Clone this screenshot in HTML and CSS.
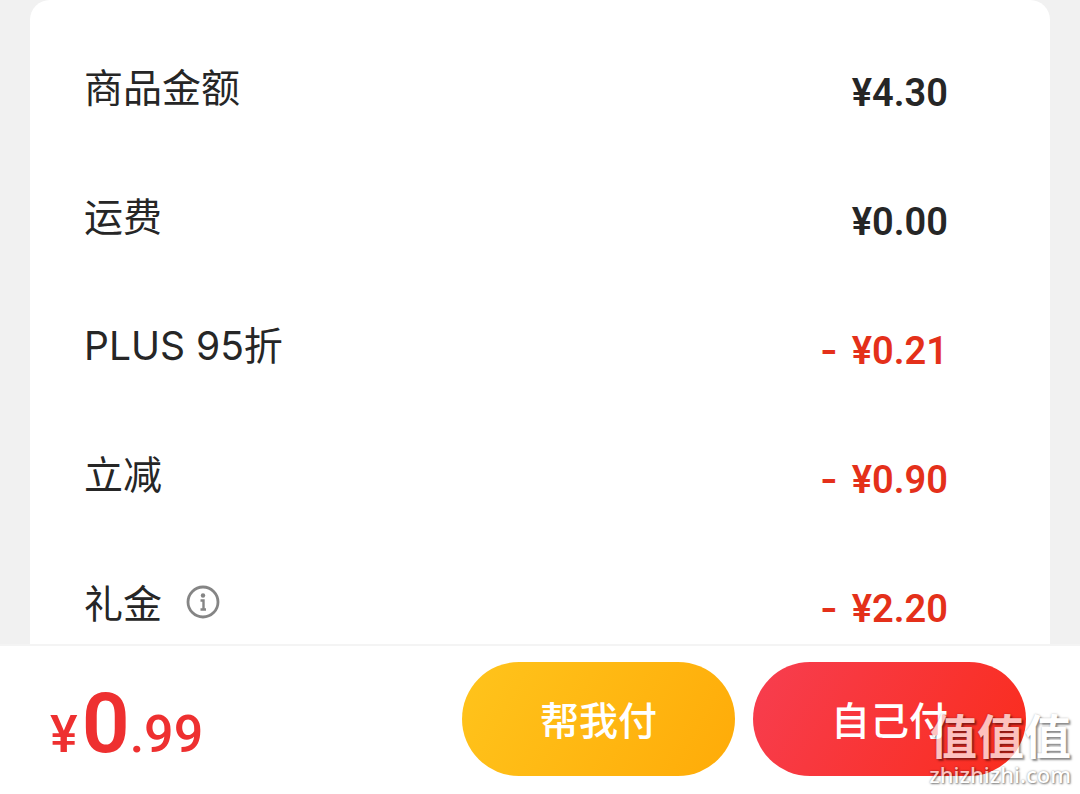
FILE: index.html
```html
<!DOCTYPE html>
<html lang="zh-CN">
<head>
    <meta charset="UTF-8">
    <meta name="viewport" content="width=device-width, initial-scale=1.0">
    <title>确认订单</title>
    <link rel="stylesheet" href="styles.css">
</head>
<body>

    <main class="content">
        <dl class="card">
            <div class="row">
                <dt>商品金额</dt>
                <dd>¥4.30</dd>
            </div>
            <div class="row">
                <dt>运费</dt>
                <dd>¥0.00</dd>
            </div>
            <div class="row discount">
                <dt>PLUS 95折</dt>
                <dd><span class="minus">-</span>¥0.21</dd>
            </div>
            <div class="row discount">
                <dt>立减</dt>
                <dd><span class="minus">-</span>¥0.90</dd>
            </div>
            <div class="row discount">
                <dt>礼金
                    <button class="info-btn" type="button" aria-label="礼金说明">
                        <svg viewBox="0 0 34 34" width="34" height="34" fill="none" stroke="#858585">
                            <circle cx="17" cy="17" r="15" stroke-width="2.8"/>
                            <circle cx="17" cy="10.5" r="2.2" fill="#858585" stroke="none"/>
                            <path d="M14.5 15.5h3v9M14.5 24.5h5.5" stroke-width="2.4"/>
                        </svg>
                    </button>
                </dt>
                <dd><span class="minus">-</span>¥2.20</dd>
            </div>
        </dl>
    </main>

    <footer class="pay-bar">
        <div class="total"><span>¥</span><strong>0</strong><span>.99</span></div>
        <div class="actions">
            <button class="pay-btn friend" type="button">帮我付</button>
            <button class="pay-btn self" type="button">自己付</button>
        </div>
    </footer>

    <div class="watermark">
        <div class="watermark-name">值值值</div>
        <div class="watermark-site">zhizhizhi.com</div>
    </div>

</body>
</html>
```
FILE: styles.css
```css
* {
    box-sizing: border-box;
}

body {
    margin: 0;
    height: 100vh;
    display: flex;
    flex-direction: column;
    overflow: hidden;
    position: relative;
    background: #f1f1f1;
    color: #262626;
    font-family: Inter, "Noto Sans CJK SC", sans-serif;
}

button {
    padding: 0;
    border: none;
    background: none;
    font-family: inherit;
    cursor: pointer;
}

/* Price details */
.content {
    flex: 1;
    min-height: 0;
    overflow: hidden;
    padding: 0 30px;
}

.card {
    margin: 0;
    padding: 24px 102px 24px 54px;
    background: #fff;
    border-radius: 20px;
}

.row {
    height: 129px;
    display: flex;
    justify-content: space-between;
    align-items: center;
}

.row dt {
    display: flex;
    align-items: center;
    gap: 24px;
    padding-bottom: 2px;
    font-size: 39px;
    line-height: 48px;
}

.row dd {
    margin: 0;
    padding-top: 8px;
    font-family: Roboto, sans-serif;
    font-size: 38px;
    line-height: 48px;
    font-weight: 600;
}

.discount dd {
    color: #e4301a;
}

.minus {
    margin-right: 14px;
    font-family: Inter, sans-serif;
}

.info-btn {
    display: flex;
    padding-bottom: 4px;
}

/* Bottom bar */
.pay-bar {
    height: 150px;
    padding: 0 54px 2px 50px;
    display: flex;
    justify-content: space-between;
    align-items: center;
    background: #fff;
    border-top: 2px solid #f4f4f4;
}

.total {
    padding-top: 20px;
    font-family: Roboto, sans-serif;
    font-size: 52px;
    font-weight: 500;
    line-height: 100px;
    color: #ee3030;
}

.total strong {
    margin-left: 4px;
    font-size: 84px;
    font-weight: 600;
}

.actions {
    display: flex;
    gap: 18px;
}

.pay-btn {
    width: 273px;
    height: 114px;
    padding-bottom: 2px;
    border-radius: 57px;
    color: #fff;
    font-size: 39px;
    font-weight: 500;
}

.friend {
    background: linear-gradient(120deg, #ffc41c, #ffab08);
}

.self {
    background: linear-gradient(120deg, #f73e50, #fa2c1c);
}

/* Site mark over the corner */
.watermark {
    position: absolute;
    right: 9px;
    bottom: 8px;
    color: #fff;
    opacity: 0.7;
    text-align: right;
    pointer-events: none;
}

.watermark-name {
    font-size: 47px;
    line-height: 50px;
    font-weight: 700;
    text-shadow: 2px 2px 2px rgba(0, 0, 0, 0.6), 0 0 2px rgba(0, 0, 0, 0.4);
}

.watermark-site {
    font-family: "Noto Sans", sans-serif;
    font-size: 22px;
    line-height: 24px;
    font-weight: 500;
    text-shadow: 1px 1px 2px rgba(0, 0, 0, 0.7), 0 0 2px rgba(0, 0, 0, 0.5);
}
```
